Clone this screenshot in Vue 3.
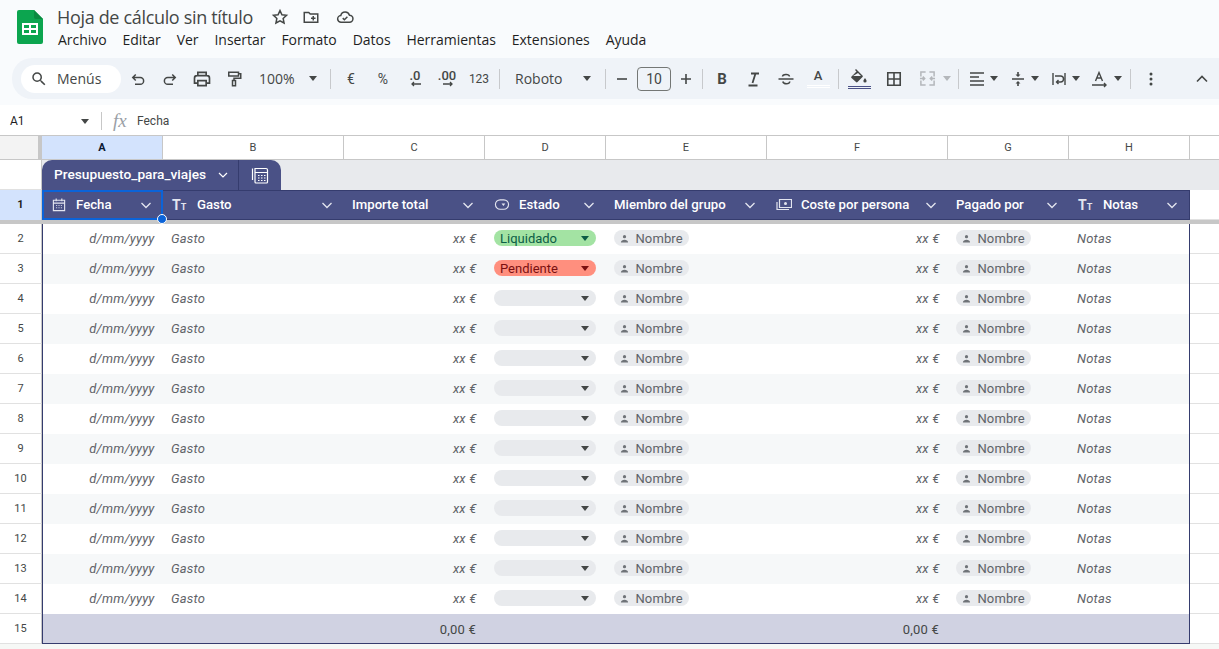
<script setup>
const menus = ['Archivo', 'Editar', 'Ver', 'Insertar', 'Formato', 'Datos', 'Herramientas', 'Extensiones', 'Ayuda']

const columns = [
  { letter: 'A', label: 'Fecha', icon: 'calendar', selected: true },
  { letter: 'B', label: 'Gasto', icon: 'text' },
  { letter: 'C', label: 'Importe total' },
  { letter: 'D', label: 'Estado', icon: 'dropdown' },
  { letter: 'E', label: 'Miembro del grupo' },
  { letter: 'F', label: 'Coste por persona', icon: 'money' },
  { letter: 'G', label: 'Pagado por' },
  { letter: 'H', label: 'Notas', icon: 'text' }
]

const rows = []
for (let n = 2; n <= 14; n++) {
  let status = { label: '', cls: 'empty' }
  if (n === 2) status = { label: 'Liquidado', cls: 'paid' }
  if (n === 3) status = { label: 'Pendiente', cls: 'pending' }
  rows.push({ n, status })
}
</script>

<template>
  <div class="sheet-app">
    <header class="top-bar">
      <svg class="logo" width="26" height="34" viewBox="0 0 26 34">
        <path d="M2 0H17L26 9V32a2 2 0 0 1-2 2H2a2 2 0 0 1-2-2V2a2 2 0 0 1 2-2z" fill="#0ca54f" />
        <path d="M17 0L26 9H19a2 2 0 0 1-2-2z" fill="#0a8a41" />
        <path d="M5 13H21V25H5zM7 15V18H12V15zM14 15V18H19V15zM7 20V23H12V20zM14 20V23H19V20z" fill="#fff" fill-rule="evenodd" />
      </svg>
      <div class="doc-info">
        <div class="title-row">
          <span class="doc-title">Hoja de cálculo sin título</span>
          <svg class="title-icon" width="18" height="18" viewBox="0 0 24 24" fill="none" stroke="#444746" stroke-width="2"><path d="M12 3.5l2.6 5.6 6.1.7-4.500 4.200 1.200 6-5.400-3-5.400 3 1.200-6-4.500-4.200 6.100-.7z" /></svg>
          <svg class="title-icon" width="18" height="18" viewBox="0 0 24 24" fill="none" stroke="#444746" stroke-width="2"><path d="M3 6h6l2 2h10v11H3zM12 13.500h6M15 10.500v6" /></svg>
          <svg class="title-icon cloud" width="20" height="18" viewBox="0 0 24 24" fill="none" stroke="#444746" stroke-width="2"><path d="M7 19a4.500 4.500 0 0 1-.6-9A6 6 0 0 1 18 9.800 4.600 4.600 0 0 1 18 19zM9 13.500l2.200 2.200 4-4" /></svg>
        </div>
        <nav class="menu-row">
          <span v-for="m in menus" :key="m" class="menu-item">{{ m }}</span>
        </nav>
      </div>
    </header>

    <div class="toolbar">
      <div class="search-pill">
        <svg width="18" height="18" viewBox="0 0 24 24" fill="#444746"><path d="M15.500 14h-.79l-.28-.27A6.470 6.470 0 0 0 16 9.500 6.500 6.500 0 1 0 9.500 16c1.610 0 3.090-.59 4.230-1.570l.27.28v.79l5 4.990L20.490 19zm-6 0C7.010 14 5 11.990 5 9.500S7.010 5 9.500 5 14 7.010 14 9.500 11.990 14 9.500 14z" /></svg>
        <span>Menús</span>
      </div>
      <button class="tool"><svg width="18" height="18" viewBox="0 0 24 24" fill="none" stroke="#444746" stroke-width="2"><path d="M9 6L5 10l4 4M5 10h10a4 4 0 0 1 0 9H8" /></svg></button>
      <button class="tool"><svg width="18" height="18" viewBox="0 0 24 24" fill="none" stroke="#444746" stroke-width="2"><path d="M15 6l4 4-4 4M19 10H9a4 4 0 0 0 0 9h7" /></svg></button>
      <button class="tool"><svg width="20" height="20" viewBox="0 0 24 24" fill="none" stroke="#444746" stroke-width="2"><path d="M7 8V4h10v4M7 17H3v-6a3 3 0 0 1 3-3h12a3 3 0 0 1 3 3v6h-4M7 14h10v6H7z" /></svg></button>
      <button class="tool"><svg width="18" height="20" viewBox="0 0 24 24" fill="none" stroke="#444746" stroke-width="2"><path d="M5 3h13v5H5zM18 5h3v6h-9v3M10 14h4v7h-4z" /></svg></button>
      <div class="select zoom-select"><span>100%</span><i class="caret"></i></div>
      <span class="sep"></span>
      <button class="tool symbol">€</button>
      <button class="tool symbol">%</button>
      <button class="tool decimals"><span>.0</span><svg width="12" height="6" viewBox="0 0 12 6" fill="none" stroke="#444746" stroke-width="1.300"><path d="M11 3H2M4 1L2 3l2 2" /></svg></button>
      <button class="tool decimals"><span>.00</span><svg width="12" height="6" viewBox="0 0 12 6" fill="none" stroke="#444746" stroke-width="1.300"><path d="M1 3h9M8 1l2 2-2 2" /></svg></button>
      <button class="tool format-num">123</button>
      <span class="sep"></span>
      <div class="select font-select"><span>Roboto</span><i class="caret"></i></div>
      <span class="sep no-right"></span>
      <button class="tool"><svg width="16" height="16" viewBox="0 0 16 16" fill="none" stroke="#444746" stroke-width="1.600"><path d="M3 8h10" /></svg></button>
      <div class="size-box">10</div>
      <button class="tool"><svg width="16" height="16" viewBox="0 0 16 16" fill="none" stroke="#444746" stroke-width="1.600"><path d="M3 8h10M8 3v10" /></svg></button>
      <span class="sep no-left"></span>
      <button class="tool bold">B</button>
      <button class="tool"><svg width="16" height="16" viewBox="0 0 16 16" fill="none" stroke="#444746" stroke-width="1.800"><path d="M5 2.500h8M9.500 2.500L6.500 12M2.500 14.500h9" /></svg></button>
      <button class="tool"><svg width="18" height="18" viewBox="0 0 18 18" fill="none" stroke="#444746" stroke-width="1.500"><path d="M1.500 9h15M5.500 6.500C5.500 4 12 3.500 12.500 6.500M5.800 11.500c.7 3 6.700 3 7 0" /></svg></button>
      <button class="tool color-a"><span>A</span><i class="swatch light"></i></button>
      <span class="sep"></span>
      <button class="tool fill-btn">
        <svg width="18" height="15" viewBox="0 0 18 15" fill="#444746"><path d="M6 0L5 1l1.500 1.500L1.500 7.500a1 1 0 0 0 0 1.500L6 13a1 1 0 0 0 1.500 0l5-5a1 1 0 0 0 0-1.500zM8 4l3 3H3z" fill-rule="evenodd" /><path d="M15 9c-1 1.400-1.600 2.200-1.600 3a1.600 1.600 0 0 0 3.200 0c0-.8-.6-1.600-1.600-3z" /></svg>
        <i class="swatch navy"></i>
      </button>
      <button class="tool borders"><svg width="16" height="16" viewBox="0 0 18 18" fill="none" stroke="#444746" stroke-width="1.800"><path d="M2 2h14v14H2zM9 2v14M2 9h14" /></svg></button>
      <button class="tool merge">
        <svg width="17" height="17" viewBox="0 0 18 18" fill="none" stroke="#b4b7bb" stroke-width="1.600"><path d="M7 2H2v5M2 11v5h5M11 2h5v5M16 11v5h-5M1 9h5M4 7l2 2-2 2M17 9h-5M14 7l-2 2 2 2" /></svg>
        <i class="caret off"></i>
      </button>
      <span class="sep"></span>
      <button class="tool wide"><svg width="16" height="16" viewBox="0 0 16 16" fill="none" stroke="#444746" stroke-width="1.500"><path d="M1 2h14M1 6h9M1 10h14M1 14h14" /></svg><i class="caret"></i></button>
      <button class="tool wide"><svg width="16" height="16" viewBox="0 0 16 16" fill="#444746"><path d="M2 7.200h12v1.500H2zM8 6L5.500 3.500h1.700V1h1.600v2.500h1.700zM8 10l2.500 2.500H8.800V15H7.200v-2.500H5.500z" /></svg><i class="caret"></i></button>
      <button class="tool wide"><svg width="16" height="16" viewBox="0 0 16 16" fill="none" stroke="#444746" stroke-width="1.400"><path d="M2 2v12M14 2v12M4 5h5.500a2.500 2.500 0 0 1 0 6H6M7.500 9L5.500 11l2 2" /></svg><i class="caret"></i></button>
      <button class="tool wide narrow"><svg width="18" height="18" viewBox="0 0 18 18" fill="none" stroke="#444746" stroke-width="1.400"><path d="M4.500 11L8 2.500 11.500 11M5.800 8h4.400M1 15h14M13 13l2 2-2 2" /></svg><i class="caret"></i></button>
      <span class="sep"></span>
      <button class="tool"><svg width="4" height="14" viewBox="0 0 4 14" fill="#444746"><circle cx="2" cy="2" r="1.500" /><circle cx="2" cy="7" r="1.500" /><circle cx="2" cy="12" r="1.500" /></svg></button>
      <button class="tool collapse"><svg width="14" height="14" viewBox="0 0 14 14" fill="none" stroke="#444746" stroke-width="1.600"><path d="M2 9.500L7 4.500l5 5" /></svg></button>
    </div>

    <div class="formula-bar">
      <span class="cell-ref">A1</span>
      <i class="caret dark"></i>
      <span class="formula-sep"></span>
      <span class="fx">fx</span>
      <span class="formula-text">Fecha</span>
    </div>

    <div class="grid">
      <div class="row col-heads">
        <div class="corner"></div>
        <div v-for="c in columns" :key="c.letter" class="col-head" :class="{ active: c.selected }">{{ c.letter }}</div>
        <div class="col-head rest"></div>
      </div>

      <div class="name-row">
        <div class="row-head"></div>
        <div class="table-tab">
          <div class="tab-name">
            <span>Presupuesto_para_viajes</span>
            <svg width="12" height="12" viewBox="0 0 12 12" fill="none" stroke="#fff" stroke-width="1.200"><path d="M2 4l4 4 4-4" /></svg>
          </div>
          <div class="tab-view">
            <svg width="18" height="18" viewBox="0 0 18 18" fill="none" stroke="#fff" stroke-width="1.200"><path d="M4 2.500h11a1.500 1.500 0 0 1 1.500 1.500v12a1 1 0 0 1-1 1H5a1 1 0 0 1-1-1zM1.500 2.500V14M4 6.500h12.500M7 9.500h1.500M10 9.500h1.500M13 9.500h1.500M7 12h1.500M10 12h1.500M13 12h1.500M7 14.500h1.500M10 14.500h1.500M13 14.500h1.500" /></svg>
          </div>
        </div>
      </div>

      <div class="row head-row">
        <div class="row-head active">1</div>
        <div v-for="c in columns" :key="c.letter" class="th" :class="{ selected: c.selected }">
          <svg v-if="c.icon === 'calendar'" class="th-icon" width="14" height="15" viewBox="0 0 16 16" fill="none" stroke="#e3e5ef" stroke-width="1.200"><path d="M2 3.500h12v11H2zM2 6.500h12M5 1.500v3M11 1.500v3M5 9h1M7.500 9h1M10 9h1M5 11.500h1M7.500 11.500h1M10 11.500h1" /></svg>
          <span v-else-if="c.icon === 'text'" class="th-icon tt">T<small>T</small></span>
          <svg v-else-if="c.icon === 'dropdown'" class="th-icon" width="15" height="15" viewBox="0 0 16 16" fill="none" stroke="#e3e5ef" stroke-width="1.200"><rect x="1" y="3" width="14" height="10" rx="5" /><path d="M7.500 7h4L9.500 9.500z" fill="#e3e5ef" stroke="none" /></svg>
          <svg v-else-if="c.icon === 'money'" class="th-icon" width="16" height="15" viewBox="0 0 16 15" fill="none" stroke="#e3e5ef" stroke-width="1.200"><path d="M3.500 2.500h12v8h-12zM1 5v7.500h12" /><circle cx="9.500" cy="6.500" r="1.500" fill="#e3e5ef" stroke="none" /></svg>
          <span class="th-label">{{ c.label }}</span>
          <svg class="chevron" width="12" height="12" viewBox="0 0 12 12" fill="none" stroke="#e3e5ef" stroke-width="1.300"><path d="M1.500 4L6 8.500 10.500 4" /></svg>
          <i v-if="c.selected" class="sel-handle"></i>
        </div>
        <div class="rest-cell"></div>
      </div>

      <div class="freeze-band"></div>

      <div v-for="r in rows" :key="r.n" class="row data-row" :class="{ odd: r.n % 2 === 1 }">
        <div class="row-head">{{ r.n }}</div>
        <div class="td first right"><em>d/mm/yyyy</em></div>
        <div class="td"><em>Gasto</em></div>
        <div class="td right"><em>xx €</em></div>
        <div class="td status-cell">
          <div class="status" :class="r.status.cls"><span>{{ r.status.label }}</span><i class="status-caret"></i></div>
        </div>
        <div class="td">
          <div class="person">
            <svg width="9" height="9" viewBox="0 0 10 10" fill="#6f7378"><circle cx="5" cy="3" r="1.800" /><path d="M1 9.500c0-2 2-3 4-3s4 1 4 3z" /></svg>
            <span>Nombre</span>
          </div>
        </div>
        <div class="td right"><em>xx €</em></div>
        <div class="td">
          <div class="person">
            <svg width="9" height="9" viewBox="0 0 10 10" fill="#6f7378"><circle cx="5" cy="3" r="1.800" /><path d="M1 9.500c0-2 2-3 4-3s4 1 4 3z" /></svg>
            <span>Nombre</span>
          </div>
        </div>
        <div class="td last"><em>Notas</em></div>
        <div class="rest-cell"></div>
      </div>

      <div class="row total-row">
        <div class="row-head">15</div>
        <div class="tf first"></div>
        <div class="tf"></div>
        <div class="tf right">0,00 €</div>
        <div class="tf"></div>
        <div class="tf"></div>
        <div class="tf right">0,00 €</div>
        <div class="tf"></div>
        <div class="tf last"></div>
        <div class="rest-cell"></div>
      </div>
      <div class="grid-foot"></div>
    </div>
  </div>
</template>

<style>
html,
body {
  margin: 0;
  background: #f9fbfd;
  overflow: hidden;
}
</style>

<style scoped>
.sheet-app {
  width: 1219px;
  height: 649px;
  overflow: hidden;
  background: #f9fbfd;
  font-family: Roboto, "Liberation Sans", sans-serif;
  color: #444746;
}

/* top */
.top-bar {
  height: 58px;
  box-sizing: border-box;
  display: flex;
  padding: 7px 0 0 17px;
  gap: 14px;
}

.logo {
  margin-top: 3px;
  flex-shrink: 0;
}

.title-row {
  display: flex;
  align-items: center;
  height: 20px;
  gap: 8px;
}

.doc-title {
  font-family: "Open Sans", sans-serif;
  font-size: 18px;
  letter-spacing: -0.33px;
  color: #444746;
  margin-right: 10px;
}

.title-icon {
  margin-right: 5px;
}

.title-icon.cloud {
  margin-left: 2px;
}

.menu-row {
  display: flex;
  gap: 16px;
  margin-top: 3px;
  margin-left: 1px;
  font-family: "Open Sans", sans-serif;
  font-size: 14px;
  letter-spacing: -0.04px;
  line-height: 20px;
  color: #1f1f1f;
}

/* toolbar */
.toolbar {
  height: 41px;
  margin: 0 0 6px 12px;
  padding-left: 9px;
  display: flex;
  align-items: center;
  background: #eff3f8;
  border-radius: 20px 0 0 20px;
}

.search-pill {
  width: 100px;
  height: 28px;
  box-sizing: border-box;
  padding-left: 9px;
  display: flex;
  align-items: center;
  gap: 9px;
  border-radius: 14px;
  background: #fff;
  font-family: "Open Sans", sans-serif;
  font-size: 14px;
  color: #444746;
  margin-right: 1px;
}

.tool {
  width: 32px;
  height: 32px;
  padding: 0;
  flex-shrink: 0;
  border: none;
  background: transparent;
  color: #444746;
  font-family: Roboto, sans-serif;
  display: flex;
  align-items: center;
  justify-content: center;
}

.select {
  display: flex;
  align-items: center;
  justify-content: space-between;
  font-family: "Open Sans", sans-serif;
  font-size: 14px;
  color: #444746;
  box-sizing: border-box;
  flex-shrink: 0;
}

.zoom-select {
  width: 76px;
  padding: 0 9.5px 0 9px;
}

.font-select {
  width: 97px;
  padding: 0 10.5px 0 11px;
}

.caret {
  display: inline-block;
  flex-shrink: 0;
  width: 0;
  height: 0;
  border-left: 4.5px solid transparent;
  border-right: 4.5px solid transparent;
  border-top: 5px solid #444746;
}

.caret.off {
  border-top-color: #b4b7bb;
  margin-left: 7px;
}

.sep {
  width: 1px;
  height: 20px;
  margin: 0 4px;
  background: #c7c9cc;
  flex-shrink: 0;
}

.sep.no-right {
  margin-right: 0;
}

.sep.no-left {
  margin-left: 0;
  margin-right: 3px;
}

.symbol {
  font-size: 14px;
}

.decimals {
  flex-direction: column;
  font-size: 13px;
  font-weight: 500;
  line-height: 11px;
}

.decimals svg {
  margin-left: 2px;
}

.format-num {
  font-size: 12px;
}

.size-box {
  width: 34px;
  height: 24px;
  flex-shrink: 0;
  box-sizing: border-box;
  border: 1px solid #747775;
  border-radius: 4px;
  margin: 0 -1px;
  text-align: center;
  font-size: 14px;
  line-height: 22px;
  color: #444746;
}

.bold {
  font-size: 15px;
  font-weight: 700;
}

.color-a {
  flex-direction: column;
  font-size: 13px;
  font-weight: 500;
  line-height: 14px;
}

.swatch {
  display: block;
  width: 23px;
  height: 3px;
  margin-top: 2px;
  box-sizing: border-box;
}

.swatch.light {
  background: #eff3f8;
  border-top: 1px solid #fff;
  border-bottom: 1px solid #fff;
}

.swatch.navy {
  background: #eff3f8;
  border-top: 1px solid #4a5186;
  border-bottom: 1px solid #4a5186;
}

.fill-btn {
  flex-direction: column;
}

.borders {
  margin-left: 3px;
}

.merge {
  width: 44px;
  padding-left: 8.5px;
  justify-content: flex-start;
}

.wide {
  width: 41px;
  gap: 5px;
}

.narrow {
  width: 40px;
}

.collapse {
  margin-left: 19px;
}

/* formula bar */
.formula-bar {
  height: 30px;
  box-sizing: border-box;
  padding-top: 2px;
  display: flex;
  align-items: center;
  background: #fff;
  font-size: 12px;
  color: #1f1f1f;
}

.cell-ref {
  width: 71px;
  padding-left: 10px;
  box-sizing: content-box;
}

.caret.dark {
  border-top-color: #444746;
}

.formula-sep {
  width: 1px;
  height: 18px;
  margin-left: 12px;
  background: #c7c7c7;
}

.fx {
  margin-left: 11px;
  width: 24px;
  font-family: "Liberation Serif", serif;
  font-style: italic;
  font-size: 19px;
  color: #9aa0a6;
}

.formula-text {
  color: #444746;
}

/* grid */
.grid {
  border-top: 1px solid #c7c7c7;
  font-size: 12px;
  color: #444746;
}

.row {
  display: grid;
  grid-template-columns: 42px 121px 181px 141px 121px 161px 181px 121px 121px 1fr;
}

.col-heads {
  height: 24px;
  box-sizing: border-box;
  border-bottom: 1px solid #c7c7c7;
  background: #fff;
}

.corner {
  background: #f3f3f3;
  border-right: 4px solid #c7c7c7;
  box-sizing: border-box;
}

.col-head {
  border-right: 1px solid #c7c7c7;
  text-align: center;
  line-height: 23px;
  font-size: 11px;
}

.col-head.active {
  background: #d3e3fd;
  color: #0b1a33;
  font-weight: 700;
}

.col-head.rest {
  border-right: none;
}

.name-row {
  height: 30px;
  display: flex;
  background: #e8eaed;
}

.row-head {
  width: 42px;
  box-sizing: border-box;
  flex-shrink: 0;
  background: #fff;
  border-right: 1px solid #c7c7c7;
  border-bottom: 1px solid #e1e1e1;
  text-align: center;
  font-size: 11px;
  line-height: 29px;
  color: #444746;
}

.row-head.active {
  background: #d3e3fd;
  font-weight: 700;
  color: #1f1f1f;
  border-bottom: none;
}

.table-tab {
  display: flex;
  height: 30px;
  background: #4a5186;
  border-radius: 10px 10px 0 0;
  color: #fff;
  font-size: 13.7px;
  font-weight: 500;
  line-height: 1;
}

.tab-name {
  width: 197px;
  box-sizing: border-box;
  padding: 0 9px 1px 12px;
  display: flex;
  align-items: center;
  justify-content: space-between;
  border-right: 1px solid #353c6e;
}

.tab-view {
  width: 42px;
  display: flex;
  align-items: center;
  justify-content: center;
}

.head-row {
  height: 30px;
}

.head-row .row-head {
  width: auto;
}

.th {
  position: relative;
  display: flex;
  align-items: center;
  box-sizing: border-box;
  padding: 0 11px 1px 8px;
  background: #4a5186;
  border-top: 1px solid #353c6e;
  border-bottom: 1px solid #353c6e;
  color: #fff;
  font-size: 13.200px;
  font-weight: 500;
}

.th:nth-child(9) {
  border-right: 1px solid #353c6e;
}

.th.selected {
  padding: 0 10px 1px 7px;
  border: 1px solid #0b63d8;
  outline: 1px solid #0b63d8;
  outline-offset: -2px;
}

.sel-handle {
  position: absolute;
  right: -5px;
  bottom: -5px;
  z-index: 2;
  width: 8px;
  height: 8px;
  border: 1px solid #fff;
  border-radius: 50%;
  background: #0b63d8;
}

.th-icon {
  width: 16px;
  margin: 0 9px 0 1px;
  flex-shrink: 0;
}

.tt {
  font-size: 14px;
  font-weight: 700;
  color: #e3e5ef;
  white-space: nowrap;
}

.tt small {
  font-size: 9px;
}

.th-label {
  flex: 1;
  white-space: nowrap;
}

.chevron {
  flex-shrink: 0;
}

.rest-cell {
  background: #fff;
  border-bottom: 1px solid #e1e1e1;
}

.freeze-band {
  height: 4px;
  background: #c7c7c7;
}

.data-row {
  height: 30px;
}

.data-row .row-head,
.total-row .row-head {
  width: auto;
}

.td {
  display: flex;
  align-items: center;
  box-sizing: border-box;
  padding: 0 8px 2px;
  background: #fff;
  color: #5f6368;
  font-size: 13px;
}

.td em {
  font-style: italic;
  letter-spacing: 0.2px;
}

.td.right {
  padding-right: 8.5px;
}

.odd .td {
  background: #f6f8f9;
}

.right {
  justify-content: flex-end;
}

.first {
  border-left: 1px solid #353c6e;
}

.last {
  border-right: 1px solid #353c6e;
}

.status-cell {
  padding: 0 10px 2px 9px;
}

.status {
  width: 100%;
  height: 16px;
  box-sizing: border-box;
  padding: 0 7px 0 6px;
  display: flex;
  align-items: center;
  justify-content: space-between;
  border-radius: 8px;
  font-size: 13px;
}

.status.paid {
  background: #a3e3a3;
  color: #0b5d46;
}

.status.pending {
  background: #ff8f7e;
  color: #7a1010;
}

.status.empty {
  background: #e8eaed;
  color: #444746;
}

.status-caret {
  width: 0;
  height: 0;
  flex-shrink: 0;
  border-left: 4.500px solid transparent;
  border-right: 4.500px solid transparent;
  border-top: 5px solid currentColor;
}

.person {
  width: 75px;
  height: 16px;
  box-sizing: border-box;
  padding-left: 5.500px;
  display: flex;
  align-items: center;
  gap: 7px;
  border-radius: 8px;
  background: #e8eaed;
  color: #5f6368;
  font-size: 13px;
  letter-spacing: 0.1px;
}

.total-row {
  height: 30px;
}

.tf {
  display: flex;
  align-items: center;
  box-sizing: border-box;
  padding: 2px 9px 0 8px;
  background: #d0d2e2;
  border-bottom: 1px solid #353c6e;
  color: #444746;
  font-size: 13px;
  letter-spacing: 0.2px;
}

.grid-foot {
  height: 5px;
  background: #f6f8f6;
}
</style>
